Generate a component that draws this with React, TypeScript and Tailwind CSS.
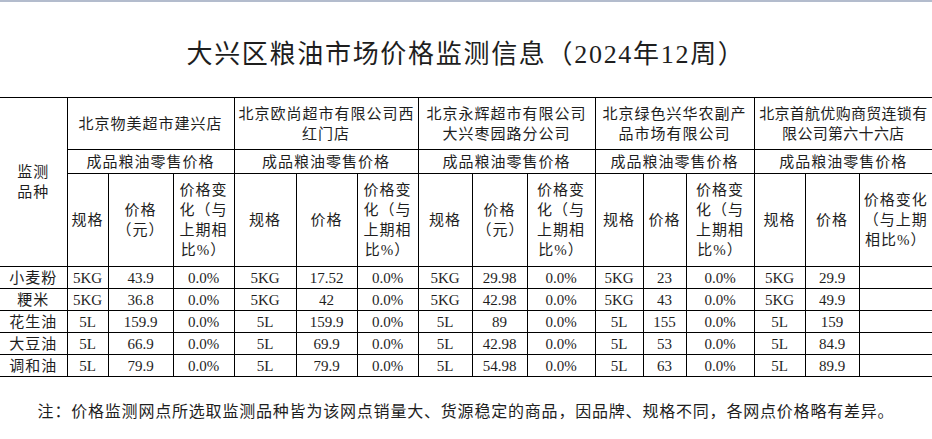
import React from "react";

const font = { fontFamily: '"Liberation Serif", "Noto Sans CJK SC", serif' };

type Row = { name: string; cells: string[] };

const rows: Row[] = [
  { name: "小麦粉", cells: ["5KG", "43.9", "0.0%", "5KG", "17.52", "0.0%", "5KG", "29.98", "0.0%", "5KG", "23", "0.0%", "5KG", "29.9", ""] },
  { name: "粳米", cells: ["5KG", "36.8", "0.0%", "5KG", "42", "0.0%", "5KG", "42.98", "0.0%", "5KG", "43", "0.0%", "5KG", "49.9", ""] },
  { name: "花生油", cells: ["5L", "159.9", "0.0%", "5L", "159.9", "0.0%", "5L", "89", "0.0%", "5L", "155", "0.0%", "5L", "159", ""] },
  { name: "大豆油", cells: ["5L", "66.9", "0.0%", "5L", "69.9", "0.0%", "5L", "42.98", "0.0%", "5L", "53", "0.0%", "5L", "84.9", ""] },
  { name: "调和油", cells: ["5L", "79.9", "0.0%", "5L", "79.9", "0.0%", "5L", "54.98", "0.0%", "5L", "63", "0.0%", "5L", "89.9", ""] },
];

const stores: string[][] = [
  ["北京物美超市建兴店"],
  ["北京欧尚超市有限公司西", "红门店"],
  ["北京永辉超市有限公司", "大兴枣园路分公司"],
  ["北京绿色兴华农副产", "品市场有限公司"],
  ["北京首航优购商贸连锁有", "限公司第六十六店"],
];

const th = "border border-black font-normal px-[4px] py-0 leading-[20px] whitespace-nowrap text-center align-middle";
const td = "border border-black px-[4px] py-0 leading-[20px] whitespace-nowrap text-center align-middle h-[22px]";

function Lines({ lines }: { lines: string[] }) {
  return (
    <>
      {lines.map((l, i) => (
        <React.Fragment key={i}>
          {i > 0 && <br />}
          {l}
        </React.Fragment>
      ))}
    </>
  );
}

const change3 = ["价格变", "化（与", "上期相", "比%）"];
const change4 = ["价格变化", "（与上期", "相比%）"];

const sub: string[][] = [
  ["规格"], ["价格", "（元）"], change3,
  ["规格"], ["价格"], change3,
  ["规格"], ["价格", "（元）"], change3,
  ["规格"], ["价格"], change3,
  ["规格"], ["价格"], change4,
];

export default function App() {
  return (
    <div className="w-[932px] h-[439px] bg-white text-[#1e1e1e] overflow-hidden" style={font}>
      <div className="h-[2px] bg-[#b3bccd]" />
      <div className="h-[95px] pt-[35px] text-center text-[26px] leading-[36px] tracking-[1.7px]">
        大兴区粮油市场价格监测信息（2024年12周）
      </div>
      <table className="w-[932px] table-fixed border-collapse text-[15px]">
        <colgroup>
          <col className="w-[67px]" />
          <col className="w-[41px]" />
          <col className="w-[65px]" />
          <col className="w-[61px]" />
          <col className="w-[62px]" />
          <col className="w-[61px]" />
          <col className="w-[61px]" />
          <col className="w-[54px]" />
          <col className="w-[55px]" />
          <col className="w-[68px]" />
          <col className="w-[48px]" />
          <col className="w-[43px]" />
          <col className="w-[68px]" />
          <col className="w-[51px]" />
          <col className="w-[54px]" />
          <col className="w-[73px]" />
        </colgroup>
        <thead>
          <tr className="h-[52px]">
            <th rowSpan={3} className={th + " border-l-0 tracking-[1px]"}>
              监测<br />品种
            </th>
            {stores.map((s, i) => (
              <th
                key={i}
                colSpan={3}
                className={th + (i === 4 ? " border-r-0 tracking-[0.3px]" : " tracking-[1px]")}
              >
                <Lines lines={s} />
              </th>
            ))}
          </tr>
          <tr className="h-[24px]">
            {stores.map((_, i) => (
              <th key={i} colSpan={3} className={th + " tracking-[1px]" + (i === 4 ? " border-r-0" : "")}>
                成品粮油零售价格
              </th>
            ))}
          </tr>
          <tr className="h-[93px]">
            {sub.map((s, i) => (
              <th key={i} className={th + " tracking-[1px]" + (i === 14 ? " border-r-0" : "")}>
                <Lines lines={s} />
              </th>
            ))}
          </tr>
        </thead>
        <tbody>
          {rows.map((r) => (
            <tr key={r.name} className="h-[22px]">
              <td className={td + " border-l-0 tracking-[1px]"}>{r.name}</td>
              {r.cells.map((c, i) => (
                <td key={i} className={td + (i === 14 ? " border-r-0" : "")}>
                  {c}
                </td>
              ))}
            </tr>
          ))}
        </tbody>
      </table>
      <div className="mt-[25px] text-center text-[16px] leading-[20px] tracking-[0.8px]">
        注：价格监测网点所选取监测品种皆为该网点销量大、货源稳定的商品，因品牌、规格不同，各网点价格略有差异。
      </div>
    </div>
  );
}
